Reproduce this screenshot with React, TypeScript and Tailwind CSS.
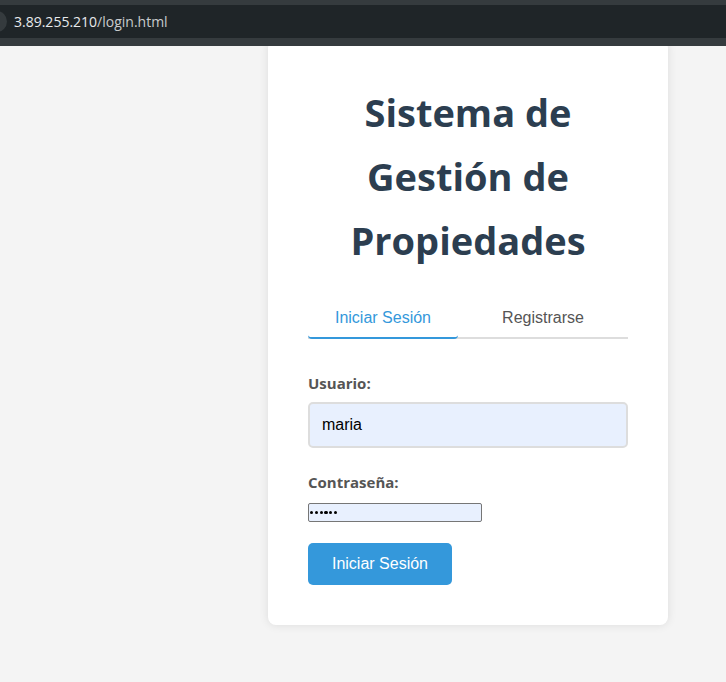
export default function App() {
  return (
    <div className="w-[726px] h-[682px] overflow-hidden bg-[#f4f4f4] flex flex-col">
      {/* browser address bar */}
      <div className="h-[46px] shrink-0 bg-[#353b3e] flex flex-col relative z-10">
        <div className="h-[5px]" />
        <div className="h-[33px] bg-[#1f2528] flex items-center relative">
          <div className="absolute left-[-14px] top-[6px] w-[21px] h-[21px] rounded-full bg-[#353b3e]" />
          <span className="ml-[14px] text-[14px] text-[#e8eaed] leading-none" style={{ fontFamily: '"Open Sans", "Noto Sans", sans-serif' }}>
            3.89.255.210<span className="text-[#c8cbcd]">/login.html</span>
          </span>
        </div>
        <div className="h-[8px]" />
      </div>
      {/* page */}
      <div className="flex-1 flex pl-[268px]">
        <div className="w-[400px] -mt-[6px] h-[585px] bg-white rounded-[8px] shadow-[0_0_10px_rgba(0,0,0,0.1)] px-[40px] pt-[40px] pb-[40px] flex flex-col">
          <h1
            className="text-center text-[38px] leading-[64px] font-bold text-[#2c3e50] mb-[27px]"
            style={{ fontFamily: '"Open Sans", "Noto Sans", sans-serif' }}
          >
            Sistema de
            <br />
            Gestión de
            <br />
            Propiedades
          </h1>
          <div className="flex border-b-2 border-[#ddd]" style={{ fontFamily: '"Liberation Sans", Arial, sans-serif' }}>
            <button className="w-[150px] h-[40px] -mb-[2px] border-b-2 border-[#3498db] rounded-b-[4px] text-[16px] text-[#3498db]">
              Iniciar Sesión
            </button>
            <button className="flex-1 h-[38px] text-[16px] text-[#555]">Registrarse</button>
          </div>
          <div className="mt-[35px] text-[15px] font-bold text-[#555] leading-[18px]" style={{ fontFamily: '"Open Sans", "Noto Sans", sans-serif' }}>
            Usuario:
          </div>
          <div
            className="mt-[10px] h-[46px] bg-[#e8f0fe] border-2 border-[#ddd] rounded-[5px] flex items-center px-[12px] text-[16px] text-black"
            style={{ fontFamily: '"Liberation Sans", Arial, sans-serif' }}
          >
            maria
          </div>
          <div className="mt-[25px] text-[15px] font-bold text-[#555] leading-[18px]" style={{ fontFamily: '"Open Sans", "Noto Sans", sans-serif' }}>
            Contraseña:
          </div>
          <div className="mt-[12px] w-[174px] h-[20px] bg-[#e8f0fe] border border-[#767676] rounded-[2px] flex items-center pl-[1px] gap-[1.6px]">
            <span className="w-[3.2px] h-[3.2px] rounded-full bg-black" />
            <span className="w-[3.2px] h-[3.2px] rounded-full bg-black" />
            <span className="w-[3.2px] h-[3.2px] rounded-full bg-black" />
            <span className="w-[3.2px] h-[3.2px] rounded-full bg-black" />
            <span className="w-[3.2px] h-[3.2px] rounded-full bg-black" />
            <span className="w-[3.2px] h-[3.2px] rounded-full bg-black" />
          </div>
          <button
            className="mt-[21px] w-[144px] h-[42px] bg-[#3498db] rounded-[5px] text-white text-[16px]"
            style={{ fontFamily: '"Liberation Sans", Arial, sans-serif' }}
          >
            Iniciar Sesión
          </button>
        </div>
      </div>
    </div>
  );
}
